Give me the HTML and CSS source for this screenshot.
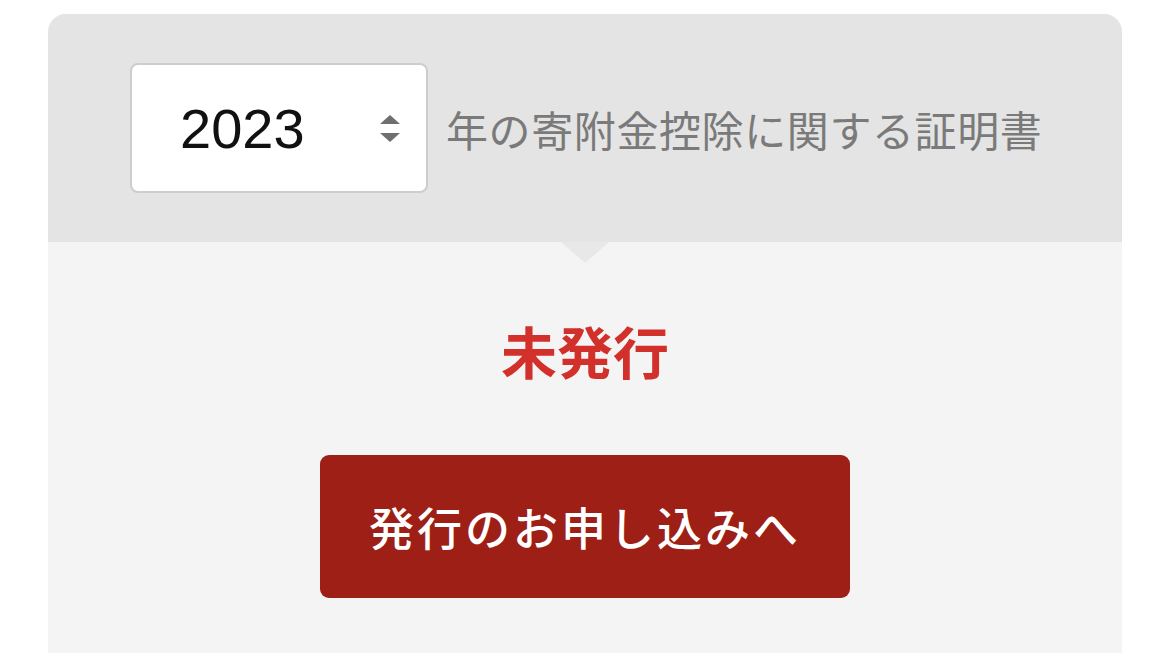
FILE: index.html
```html
<!DOCTYPE html>
<html lang="ja">
<head>
    <meta charset="UTF-8">
    <meta name="viewport" content="width=device-width, initial-scale=1.0">
    <title>寄附金控除に関する証明書</title>
    <link rel="stylesheet" href="styles.css">
</head>
<body>

    <div class="cert-card">

        <div class="cert-head">
            <div class="year-select">
                <select id="year">
                    <option>2023</option>
                    <option>2022</option>
                    <option>2021</option>
                </select>
                <svg class="select-arrow" width="20" height="28" viewBox="0 0 20 28">
                    <path d="M10 0 L20 9 L0 9 Z" fill="#6f6f6f"/>
                    <path d="M0 18 L20 18 L10 27 Z" fill="#6f6f6f"/>
                </svg>
            </div>
            <span class="head-label">年の寄附金控除に関する証明書</span>
        </div>

        <div class="cert-body">
            <p class="status">未発行</p>
            <button class="apply-btn">発行のお申し込みへ</button>
        </div>

    </div>

</body>
</html>
```

FILE: styles.css
```css
body {
    margin: 0;
    padding: 14px 48px 0;
    background-color: #fff;
    font-family: 'Noto Sans CJK JP', 'Noto Sans', sans-serif;
}


.cert-card {
    border-radius: 18px 18px 0 0;
    overflow: hidden;
    background-color: #f4f4f4;
}


.cert-head {
    position: relative;
    display: flex;
    align-items: center;
    height: 228px;
    padding-left: 82px;
    background-color: #e4e4e4;
}

.cert-head::after {
    content: '';
    position: absolute;
    left: 50%;
    bottom: -21px;
    margin-left: -24px;
    border-left: 24px solid transparent;
    border-right: 24px solid transparent;
    border-top: 21px solid #e8e8e8;
}


.year-select {
    position: relative;
    width: 298px;
    height: 130px;
}

.year-select select {
    appearance: none;
    -webkit-appearance: none;
    box-sizing: border-box;
    width: 100%;
    height: 100%;
    padding: 0 0 0 48px;
    border: 2px solid #cdcdcd;
    border-radius: 8px;
    background-color: #fff;
    font-family: 'Liberation Sans', Arial, sans-serif;
    font-size: 56px;
    color: #111;
}

.select-arrow {
    position: absolute;
    top: 52px;
    right: 28px;
    pointer-events: none;
}


.head-label {
    margin-left: 18px;
    font-size: 42px;
    letter-spacing: 0.6px;
    color: #7a7a7a;
}


.cert-body {
    display: flex;
    flex-direction: column;
    align-items: center;
    height: 411px;
}

.status {
    margin: 68px 0 0;
    font-size: 56px;
    font-weight: bold;
    line-height: 80px;
    color: #d2302a;
}

.apply-btn {
    margin-top: 65px;
    width: 530px;
    height: 143px;
    border: none;
    border-radius: 9px;
    background-color: #9d1f16;
    color: #fff;
    font-family: inherit;
    font-size: 45px;
    font-weight: 500;
    letter-spacing: 3px;
    cursor: pointer;
}
```
